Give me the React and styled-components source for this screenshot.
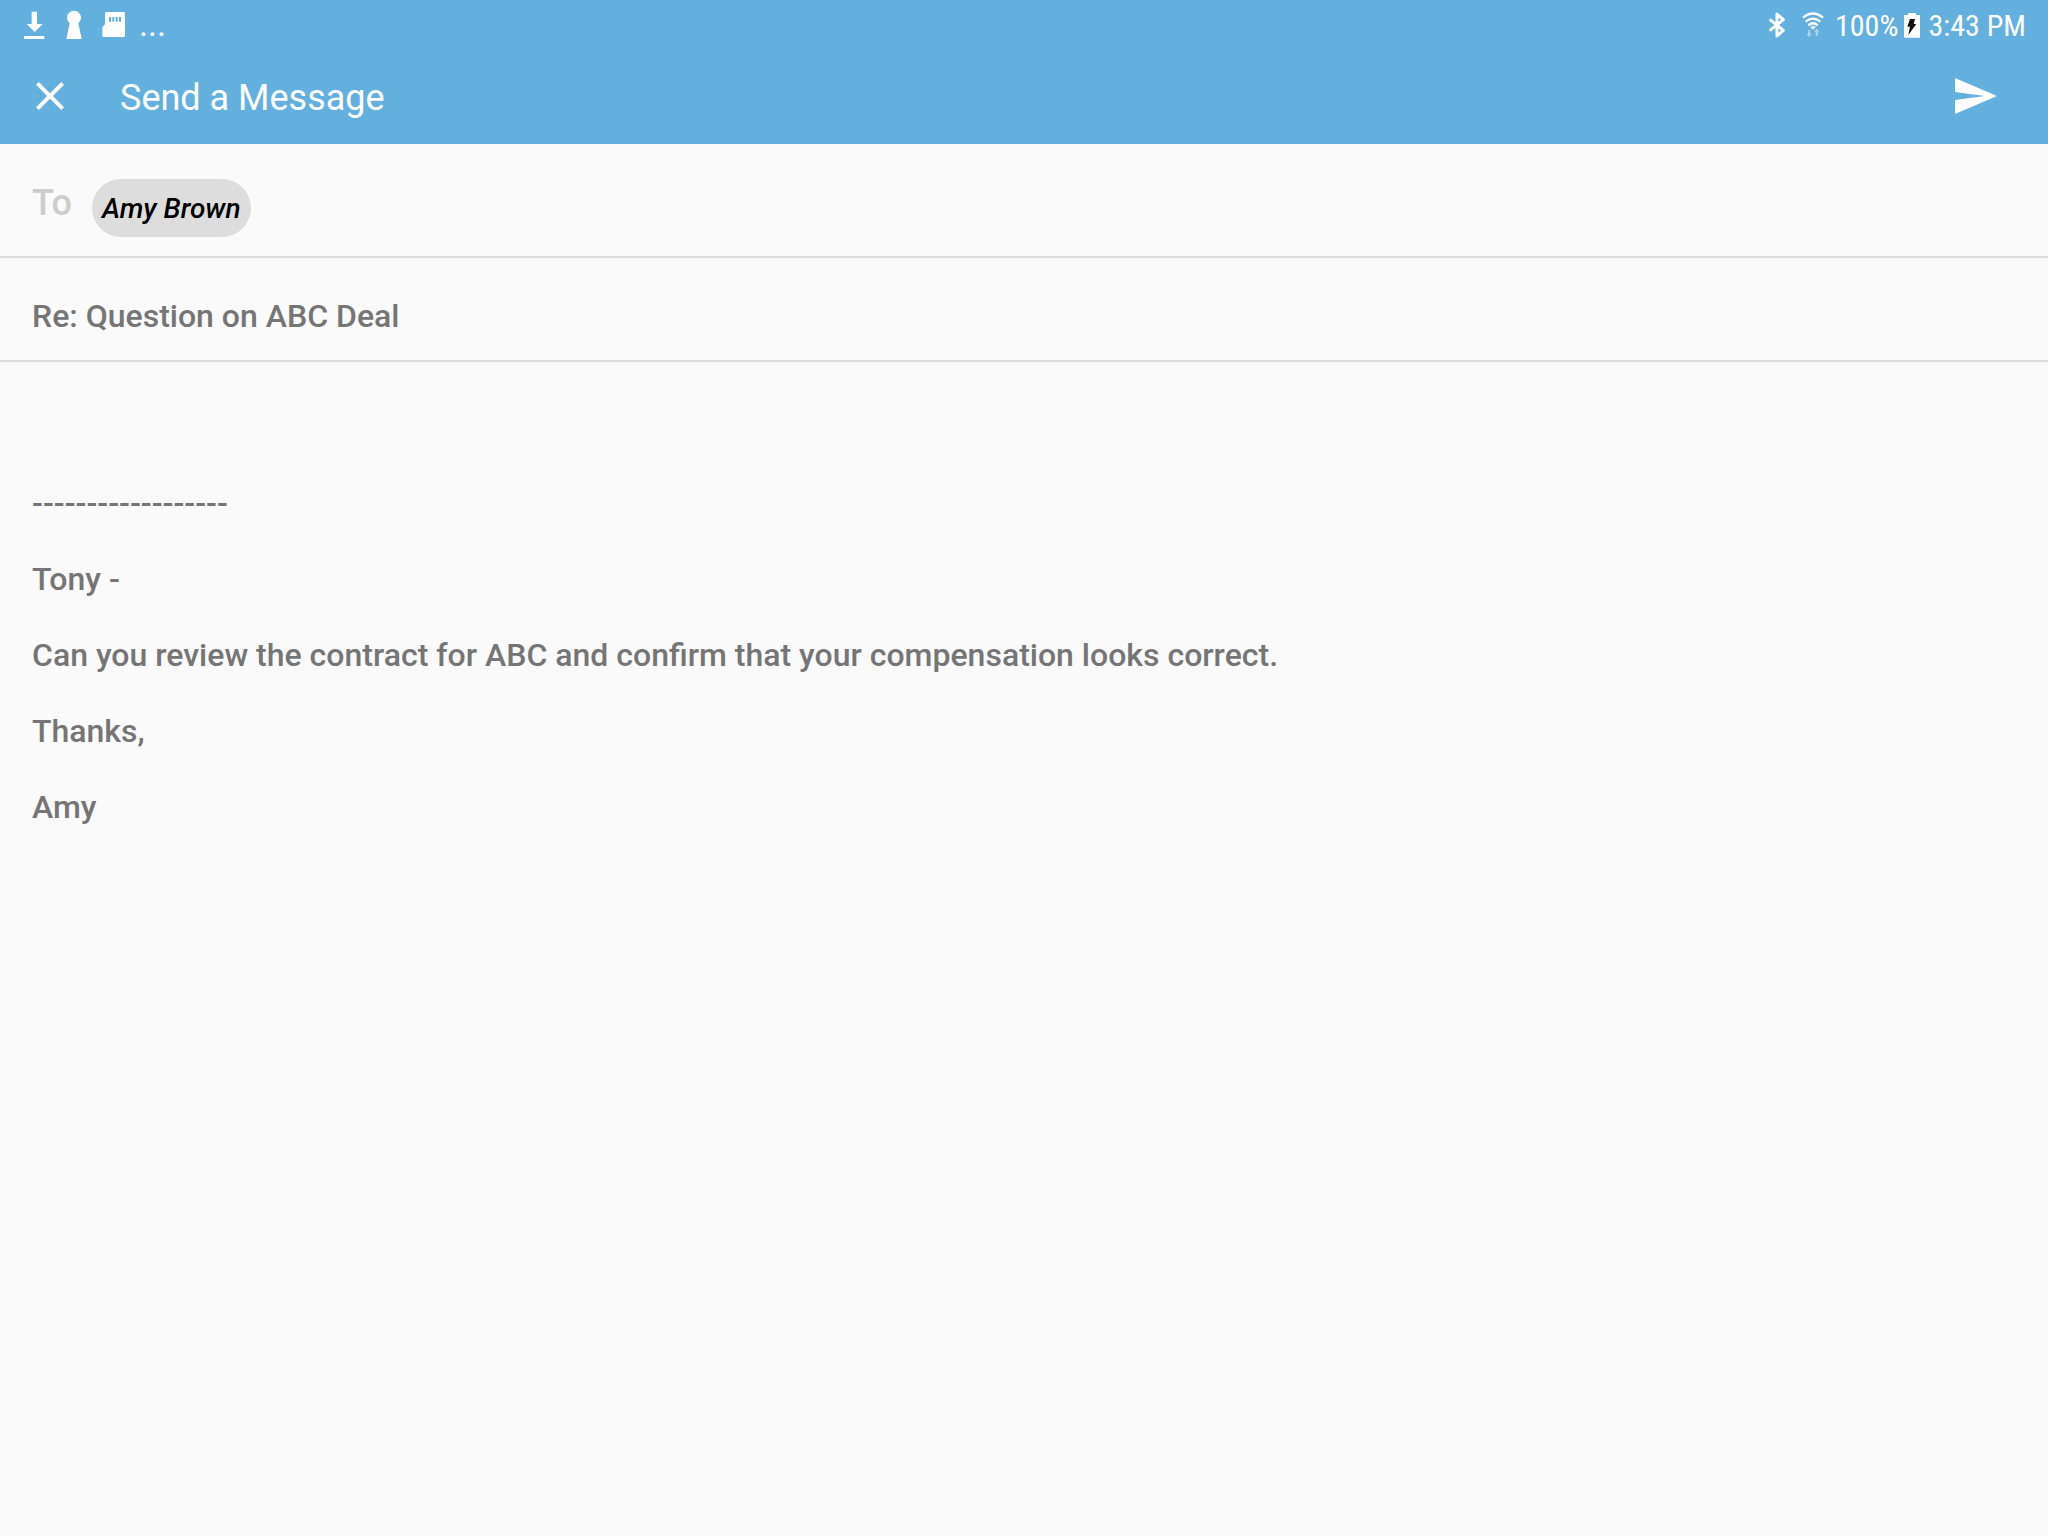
import React, { useState } from 'react'
import styled, { createGlobalStyle } from 'styled-components'

const GlobalStyle = createGlobalStyle`
  * {
    box-sizing: border-box;
  }
  body {
    margin: 0;
    background: #fafafa;
    font-family: Roboto, "Liberation Sans", sans-serif;
  }
`

const quoted = `


------------------

Tony -

Can you review the contract for ABC and confirm that your compensation looks correct.

Thanks,

Amy`

function DownloadIcon() {
  return (
    <StatusIcon viewBox="66 0 72 144">
      <path d="M95 35h16v37h17l-24 24-24-24h15zM72 108h61v9H72z" />
    </StatusIcon>
  )
}

function KeyholeIcon() {
  return (
    <StatusIcon viewBox="186 0 72 144">
      <circle cx="222" cy="53" r="21" />
      <path d="M210 66h24l11 51h-46z" />
    </StatusIcon>
  )
}

function SdCardIcon() {
  return (
    <StatusIcon viewBox="306 0 72 144">
      <path
        fillRule="evenodd"
        d="M320 36h51q4 0 4 4v67q0 4-4 4h-60q-4 0-4-4V82l8-9V40q0-4 5-4zM327 51v14h6V51zM337 51v14h6V51zM347 51v14h6V51zM357 51v14h6V51z"
      />
    </StatusIcon>
  )
}

function BluetoothIcon() {
  return (
    <StatusIcon viewBox="69 0 72 144">
      <path
        d="M83 58l41 33-19 17V42l19 17-41 33"
        fill="none"
        stroke="currentColor"
        strokeWidth="9"
        strokeLinejoin="round"
      />
    </StatusIcon>
  )
}

function WifiIcon() {
  return (
    <StatusIcon viewBox="179 0 72 144">
      <g fill="none" stroke="currentColor" strokeWidth="7">
        <path d="M185 53q30-25 60 0" />
        <path d="M193 65q22-18 44 0" />
        <path d="M201 76q14-12 28 0" />
      </g>
      <path d="M207 81q8-6 16 0l-8 8z" />
      <path d="M200 91h7v11h5l-9 9-8-9h5zM223 107h7V95h5l-9-9-8 9h5z" opacity="0.45" />
    </StatusIcon>
  )
}

function BatteryIcon() {
  return (
    <BatterySvg viewBox="489 0 48 144" aria-hidden="true">
      <path d="M502 39h23v6h12v68h-48V45h13z" />
      <path d="M507 57h15l-4 15h8l-24 33 5-25h-8z" fill="#111" />
    </BatterySvg>
  )
}

function App() {
  const [to, setTo] = useState('')
  const [subject, setSubject] = useState('Re: Question on ABC Deal')
  const [message, setMessage] = useState(quoted)

  return (
    <Screen>
      <GlobalStyle />
      <Header>
        <StatusBar>
          <Notifications>
            <DownloadIcon />
            <KeyholeIcon />
            <SdCardIcon />
            <More>...</More>
          </Notifications>
          <System>
            <Radios>
              <BluetoothIcon />
              <WifiIcon />
            </Radios>
            <Power>
              <span>100%</span>
              <BatteryIcon />
            </Power>
            <span>3:43 PM</span>
          </System>
        </StatusBar>
        <Toolbar>
          <IconButton type="button" aria-label="Close">
            <svg viewBox="0 0 24 24">
              <path d="M19 6.41L17.59 5 12 10.59 6.41 5 5 6.41 10.59 12 5 17.59 6.41 19 12 13.41 17.59 19 19 17.59 13.41 12z" />
            </svg>
          </IconButton>
          <Title>Send a Message</Title>
          <IconButton type="button" aria-label="Send">
            <svg viewBox="0 0 24 24">
              <path d="M2.01 21L23 12 2.01 3 2 10l15 2-15 2z" />
            </svg>
          </IconButton>
        </Toolbar>
      </Header>
      <Form>
        <ToRow>
          <ToLabel htmlFor="to">To</ToLabel>
          <Chip>Amy Brown</Chip>
          <Input id="to" value={to} onChange={(e) => setTo(e.target.value)} />
        </ToRow>
        <SubjectRow>
          <Input
            aria-label="Subject"
            value={subject}
            onChange={(e) => setSubject(e.target.value)}
          />
        </SubjectRow>
        <Message
          aria-label="Message"
          spellCheck="false"
          value={message}
          onChange={(e) => setMessage(e.target.value)}
        />
      </Form>
    </Screen>
  )
}

const Screen = styled.div`
  display: flex;
  flex-direction: column;
  min-height: 100vh;
`

const Header = styled.header`
  background: #63b0df;
  color: white;
`

const StatusBar = styled.div`
  display: flex;
  justify-content: space-between;
  height: 48px;
  padding: 0 22px;
`

const Notifications = styled.div`
  display: flex;
  gap: 16px;
`

const System = styled.div`
  display: flex;
  gap: 8px;
  font-family: "Roboto Condensed", Roboto, sans-serif;
  font-size: 30px;
  line-height: 52px;
  white-space: nowrap;
`

const Radios = styled.div`
  display: flex;
  gap: 12px;
  padding-right: 2px;
`

const Power = styled.div`
  display: flex;
  gap: 6px;
`

const StatusIcon = styled.svg.attrs({ 'aria-hidden': true })`
  width: 24px;
  height: 48px;
  fill: currentColor;
`

const BatterySvg = styled.svg`
  width: 16px;
  height: 48px;
  fill: currentColor;
`

const More = styled.span`
  margin-left: -3px;
  font-size: 34px;
  line-height: 48px;
`

const Toolbar = styled.div`
  display: flex;
  align-items: center;
  height: 96px;
  padding: 0 49px 0 26px;
`

const IconButton = styled.button`
  width: 48px;
  height: 48px;
  padding: 0;
  border: none;
  background: none;
  color: inherit;
  svg {
    display: block;
    fill: currentColor;
  }
`

const Title = styled.h1`
  flex: 1;
  margin: 0 0 0 46px;
  padding-top: 3px;
  font-size: 36px;
  font-weight: 400;
`

const Form = styled.form`
  flex: 1;
  display: flex;
  flex-direction: column;
`

const Row = styled.div`
  display: flex;
  border-bottom: 2px solid #dcdcdc;
`

const ToRow = styled(Row)`
  align-items: center;
  padding: 35px 32px 19px;
`

const SubjectRow = styled(Row)`
  padding: 39px 32px 25px;
`

const ToLabel = styled.label`
  margin: 0 20px 10px 0;
  color: #cccccc;
  font-size: 36px;
  font-weight: 500;
`

const Chip = styled.span`
  padding: 2px 10px 0;
  border-radius: 29px;
  background: #dddddd;
  color: black;
  font-size: 28px;
  font-style: italic;
  font-weight: 500;
  line-height: 56px;
`

const Input = styled.input`
  flex: 1;
  min-width: 0;
  height: 38px;
  padding: 0;
  border: none;
  outline: none;
  background: none;
  color: #757575;
  font: 500 32px/38px Roboto, "Liberation Sans", sans-serif;
`

const Message = styled.textarea`
  flex: 1;
  padding: 8px 32px;
  border: none;
  outline: none;
  resize: none;
  background: none;
  color: #757575;
  font: 500 32px/38px Roboto, "Liberation Sans", sans-serif;
`

export default App
